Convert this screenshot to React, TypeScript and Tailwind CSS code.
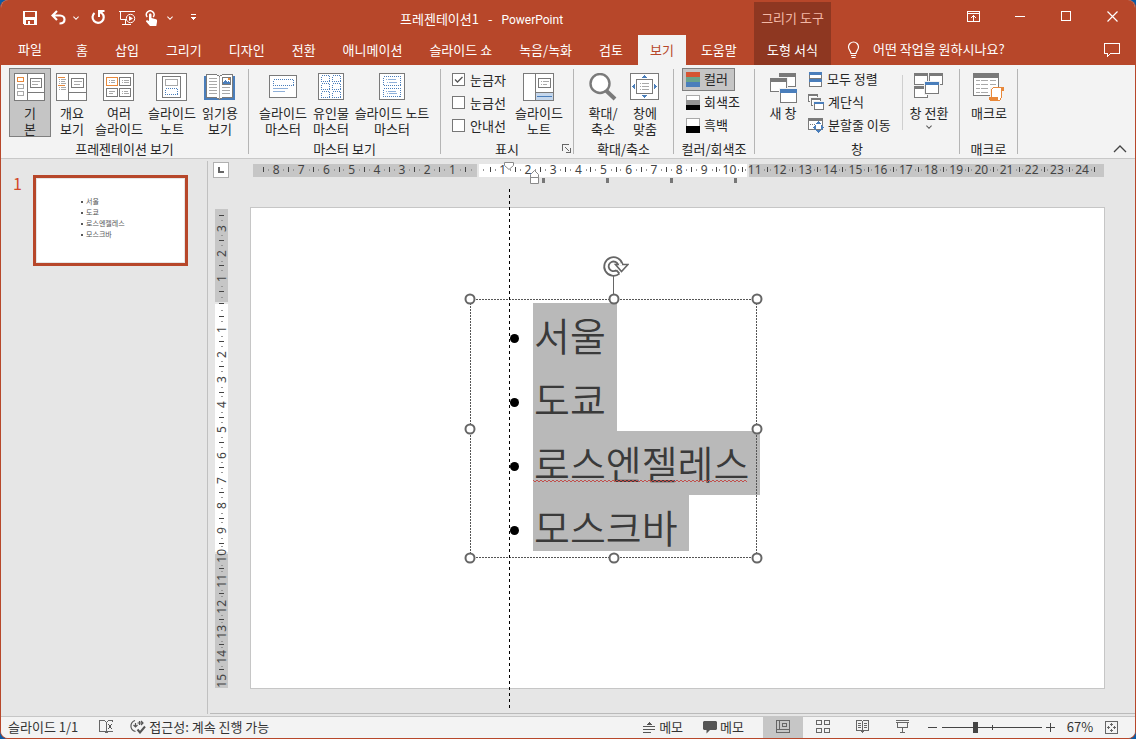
import React from 'react';

const GRAY = '#7a7a7a';
const LIGHT = '#a9a9a9';
const BLUE = '#4a7ebb';
const ORANGE = '#e8883a';

interface IconProps {
  w: number;
  h: number;
  children: React.ReactNode;
  crisp?: boolean;
}

const Icon: React.FC<IconProps> = ({ w, h, children, crisp = true }) => (
  <svg
    width={w}
    height={h}
    viewBox={`0 0 ${w} ${h}`}
    fill="none"
    className="shrink-0"
    shapeRendering={crisp ? 'crispEdges' : 'auto'}
    aria-hidden="true"
  >
    {children}
  </svg>
);

interface BoxProps {
  x: number;
  y: number;
  w: number;
  h: number;
  stroke?: string;
  fill?: string;
  dotted?: boolean;
}

// One pixel outline, x/y/w/h are the outer edges
const Box: React.FC<BoxProps> = ({ x, y, w, h, stroke = GRAY, fill = 'none', dotted }) => (
  <rect
    x={x + 0.5}
    y={y + 0.5}
    width={w - 1}
    height={h - 1}
    stroke={stroke}
    fill={fill}
    strokeDasharray={dotted ? '1 1' : undefined}
  />
);

const Line: React.FC<{ d: string; c?: string }> = ({ d, c = GRAY }) => <path d={d} stroke={c} />;

const NormalIcon = () => (
  <Icon w={31} h={28}>
    <Box x={0} y={0} w={31} h={28} fill="#fff" />
    <Line d="M13.5 0V28M13 19.5H31" />
    <Box x={3} y={4} w={7} h={5} stroke={ORANGE} />
    <Box x={3} y={11} w={7} h={5} stroke={LIGHT} />
    <Box x={3} y={18} w={7} h={5} stroke={LIGHT} />
    <Box x={16} y={5} w={12} h={10} />
    <Line d="M18 8.5H26M18 11.5H24" c={LIGHT} />
  </Icon>
);

const OutlineIcon = () => (
  <Icon w={31} h={28}>
    <Box x={0} y={0} w={31} h={28} fill="#fff" />
    <Line d="M12.5 0V28M12 19.5H31" />
    <Line d="M2 4.5H9M2 12.5H9" c={ORANGE} />
    <Line d="M3 6.5H4M5 6.5H10M3 8.5H4M5 8.5H9M3 10.5H4M5 10.5H10M3 14.5H4M5 14.5H10M3 16.5H4M5 16.5H10" c={LIGHT} />
    <Box x={15} y={5} w={13} h={10} />
    <Line d="M18 8.5H26M18 11.5H24" c={LIGHT} />
  </Icon>
);

const SorterIcon = () => (
  <Icon w={31} h={28}>
    <Box x={0} y={0} w={31} h={28} fill="#fff" />
    <Box x={3} y={4} w={12} h={9} stroke={ORANGE} />
    <Box x={16} y={4} w={12} h={9} />
    <Box x={3} y={15} w={12} h={9} />
    <Box x={16} y={15} w={12} h={9} />
    <Line
      d="M6 7.5H7M8 7.5H12M6 9.5H7M8 9.5H12M19 7.5H20M21 7.5H26M19 9.5H20M21 9.5H26M6 18.5H12M6 20.5H10M19 18.5H20M21 18.5H25M19 20.5H20M21 20.5H26"
      c={LIGHT}
    />
  </Icon>
);

const NotesPageIcon = () => (
  <Icon w={31} h={28}>
    <Box x={0} y={0} w={31} h={28} fill="#fff" />
    <Box x={6} y={3} w={19} h={22} />
    <Box x={9} y={6} w={13} h={7} stroke={LIGHT} />
    <Box x={9} y={15} w={13} h={7} stroke={BLUE} dotted />
  </Icon>
);

const ReadingIcon = () => (
  <Icon w={31} h={28}>
    <path d="M0 3H31V27H0Z" fill={BLUE} />
    <path d="M2.5 1.5H12.5L15.5 3.5L18.5 1.5H28.5V24.5H18.5L15.5 26.5L12.5 24.5H2.5Z" fill="#fff" stroke={GRAY} />
    <Line d="M15.5 4V26" c={LIGHT} />
    <Line d="M5 5.5H13M5 8.5H13M5 11.5H13M5 14.5H13M5 17.5H13M5 20.5H13M18 14.5H26M18 17.5H26M18 20.5H26" c={LIGHT} />
    <Box x={18} y={4} w={9} h={8} />
    <path d="M19 11V9L21 7L23 9L24 8L26 10V11Z" fill={BLUE} />
    <path d="M24 5H26V7H24Z" fill={ORANGE} />
  </Icon>
);

const SlideMasterIcon = () => (
  <Icon w={28} h={28}>
    <rect x="0.5" y="2.5" width="27" height="22" rx="1" fill="#fff" stroke={GRAY} />
    <Box x={4} y={6} w={21} h={7} stroke={BLUE} dotted />
    <Line d="M4 15.5H19M4 18.5H16" c="#8fb0d9" />
  </Icon>
);

const HandoutIcon = () => (
  <Icon w={26} h={28}>
    <Box x={0} y={0} w={26} h={27} fill="#fff" />
    {[2, 10, 18].map((y) => (
      <React.Fragment key={y}>
        <Box x={3} y={y} w={9} h={7} stroke={BLUE} dotted />
        <Box x={14} y={y} w={9} h={7} stroke={BLUE} dotted />
      </React.Fragment>
    ))}
  </Icon>
);

const NotesMasterIcon = () => (
  <Icon w={26} h={28}>
    <Box x={0} y={0} w={26} h={27} fill="#fff" />
    <Box x={4} y={3} w={18} h={10} stroke={BLUE} dotted />
    <Box x={4} y={15} w={18} h={9} stroke={BLUE} dotted />
    <Line d="M7 6.5H8M9 6.5H17M8 9.5H9M10 9.5H18M7 18.5H8M9 18.5H17M8 20.5H9M10 20.5H18" c="#8fb0d9" />
  </Icon>
);

const SlideNotesIcon = () => (
  <Icon w={31} h={28}>
    <Box x={0} y={0} w={31} h={28} fill="#fff" />
    <path d="M13 20H30V27H13Z" fill="#c5d7ec" />
    <Line d="M12.5 0V28M13 19.5H31" />
    <Line d="M14 23.5H29" c={BLUE} />
    <Box x={15} y={5} w={13} h={10} />
    <Line d="M18 8.5H19M20 8.5H26M18 11.5H19M20 11.5H24" c={LIGHT} />
  </Icon>
);

const MagnifierIcon = () => (
  <Icon w={28} h={28} crisp={false}>
    <path d="M16.5 17L26 26" stroke={GRAY} strokeWidth="4" />
    <circle cx="11" cy="10.5" r="9.5" fill="#fff" stroke={GRAY} strokeWidth="2.4" />
  </Icon>
);

const FitIcon = () => (
  <Icon w={29} h={28}>
    <Box x={0} y={0} w={29} h={27} fill="#fff" />
    <Box x={6} y={6} w={17} h={15} />
    <Line d="M10 10.5H11M12 10.5H19M10 13.5H11M12 13.5H19M10 16.5H11M12 16.5H19" c={LIGHT} />
    <path d="M12 5L14.5 2L17 5ZM12 22L14.5 25L17 22ZM5 11V16L2 13.5ZM24 11V16L27 13.5Z" fill={BLUE} />
  </Icon>
);

const ColorIcon: React.FC<{ bands: string[] }> = ({ bands }) => (
  <Icon w={14} h={15}>
    <Box x={0} y={0} w={14} h={15} stroke={LIGHT} fill="#fff" />
    {bands.map((band, i) => {
      const h = 15 / bands.length;
      return band === '#fff' ? null : <rect key={band} x="0" y={Math.round(i * h)} width="14" height={Math.round(h)} fill={band} />;
    })}
  </Icon>
);

const Win: React.FC<{ x: number; y: number; w: number; h: number; bar: number; c?: string }> = ({ x, y, w, h, bar, c = GRAY }) => (
  <>
    <rect x={x - 1} y={y - 1} width={w + 2} height={h + 2} fill="#f3f3f3" />
    <Box x={x} y={y} w={w} h={h} fill="#fff" />
    <rect x={x} y={y} width={w} height={bar} fill={c} />
  </>
);

const NewWindowIcon = () => (
  <Icon w={28} h={32}>
    <Win x={10} y={0} w={17} h={14} bar={4} />
    <Win x={1} y={5} w={17} h={14} bar={4} />
    <Win x={11} y={16} w={17} h={14} bar={4} c={BLUE} />
  </Icon>
);

const ArrangeIcon = () => (
  <Icon w={15} h={15}>
    <Box x={1} y={0} w={13} h={7} fill="#fff" />
    <path d="M1 0H14V3H1Z" fill={BLUE} />
    <Box x={1} y={7} w={13} h={8} fill="#fff" />
    <path d="M1 7H14V10H1Z" fill={BLUE} />
  </Icon>
);

const CascadeIcon = () => (
  <Icon w={16} h={16}>
    <Win x={0} y={0} w={10} h={8} bar={2} />
    <Win x={3} y={4} w={10} h={8} bar={2} />
    <Win x={6} y={8} w={10} h={8} bar={2} c={BLUE} />
  </Icon>
);

const SplitIcon = () => (
  <Icon w={16} h={15}>
    <Box x={0} y={0} w={15} h={12} fill="#fff" />
    <rect width="15" height="3" fill={GRAY} />
    <Line d="M2 6.5H3M4 6.5H5M6 6.5H7" />
    <path d="M8 6L10.5 3L13 6ZM8 12L10.5 15L13 12ZM8 7V12L5 9.5ZM13 7V12L16 9.5Z" fill={BLUE} />
    <path d="M9 8H12V11H9Z" fill="#fff" />
  </Icon>
);

const SwitchIcon = () => (
  <Icon w={29} h={28}>
    <Win x={0} y={0} w={14} h={12} bar={3} />
    <Win x={15} y={0} w={14} h={12} bar={3} />
    <Win x={0} y={13} w={14} h={12} bar={3} />
    <Win x={11} y={9} w={14} h={12} bar={3} c={BLUE} />
  </Icon>
);

const MacroIcon = () => (
  <Icon w={31} h={28}>
    <Box x={0} y={0} w={26} h={23} fill="#fff" />
    <rect width="26" height="5" fill={GRAY} />
    {[7, 11, 15, 19].map((y) => (
      <Line key={y} d={`M3 ${y}.5H7M8 ${y}.5H15M17 ${y}.5H23`} c={LIGHT} />
    ))}
    <path d="M17 14H31V18H30V28H15V23H17Z" fill="#f3f3f3" />
    <path d="M18.5 24V16.5L20.5 14.5H30.5V17.5H28.5V24.5L26.5 27.5H18.5L16.5 26.5V24.5H24.5" fill="#fff" stroke={ORANGE} />
    <path d="M28 14H31V18H28ZM16 24H25V28H18L16 26Z" fill={ORANGE} />
  </Icon>
);

const Chevron: React.FC<{ w?: number; c?: string; up?: boolean }> = ({ w = 7, c = '#fff', up }) => (
  <svg width={w} height={Math.ceil(w / 2) + 1} viewBox="0 0 14 8" fill="none" className={up ? 'rotate-180' : ''} aria-hidden="true">
    <path d="M1 1L7 7L13 1" stroke={c} strokeWidth={w > 10 ? 1.3 : 2.4} />
  </svg>
);

interface BigButtonProps {
  icon: React.ReactNode;
  lines: string[];
  width: string;
  active?: boolean;
  chevron?: boolean;
}

const BigButton: React.FC<BigButtonProps> = ({ icon, lines, width, active, chevron }) => (
  <button
    type="button"
    className={`flex h-[69px] shrink-0 flex-col items-center border pt-1 leading-4 ${width} ${
      active ? 'border-[#7f7f7f] bg-[#c5c5c5]' : 'border-transparent'
    }`}
  >
    <span className="flex h-8 shrink-0 items-start pr-px">{icon}</span>
    <span className="text-center whitespace-pre">{lines.join('\n')}</span>
    {chevron && (
      <span className="pt-1">
        <Chevron w={6} c="#555" />
      </span>
    )}
  </button>
);

const SmallButton: React.FC<{ icon: React.ReactNode; label: string; active?: boolean }> = ({ icon, label, active }) => (
  <button
    type="button"
    className={`flex h-[23px] items-center gap-1 whitespace-nowrap border pr-1.5 pb-px pl-[3px] ${
      active ? 'border-[#7f7f7f] bg-[#c5c5c5]' : 'border-transparent'
    }`}
  >
    {icon}
    <span className="leading-4">{label}</span>
  </button>
);

const Group: React.FC<{ label: string; width: string; launcher?: boolean; children: React.ReactNode }> = ({
  label,
  width,
  launcher,
  children,
}) => (
  <section aria-label={label} className={`flex shrink-0 ${width}`}>
    <div className="relative flex min-w-0 flex-1 flex-col">
      <div className="flex pl-[7px]">{children}</div>
      <div className="mt-1 text-center leading-4 whitespace-nowrap">{label}</div>
      {launcher && (
        <button type="button" aria-label="표시 옵션" className="absolute right-0.5 bottom-1">
          <Icon w={9} h={9}>
            <path d="M0.5 7V0.5H7M3 3L7 7M8.5 3.5V8.5H3.5" stroke="#666" />
          </Icon>
        </button>
      )}
    </div>
    <div className="mt-px h-[85px] w-px bg-[#b5b5b5]" />
  </section>
);

const showOptions = [
  { id: 'ruler', label: '눈금자', checked: true },
  { id: 'gridlines', label: '눈금선', checked: false },
  { id: 'guides', label: '안내선', checked: false },
];

const Ribbon = () => (
  <div className="flex border-b border-[#c8c8c8] bg-[#f3f3f3] pt-[3px] pb-px text-[13px] text-[#262626]">
    <Group label="프레젠테이션 보기" width="w-[248px]">
      <span className="w-px" />
      <BigButton icon={<NormalIcon />} lines={['기', '본']} width="w-[42px]" active />
      <BigButton icon={<OutlineIcon />} lines={['개요', '보기']} width="w-[42px]" />
      <BigButton icon={<SorterIcon />} lines={['여러', '슬라이드']} width="w-[52px]" />
      <BigButton icon={<NotesPageIcon />} lines={['슬라이드', '노트']} width="w-[54px]" />
      <BigButton icon={<ReadingIcon />} lines={['읽기용', '보기']} width="w-[42px]" />
    </Group>
    <Group label="마스터 보기" width="w-[192px]">
      <BigButton icon={<SlideMasterIcon />} lines={['슬라이드', '마스터']} width="w-[54px]" />
      <BigButton icon={<HandoutIcon />} lines={['유인물', '마스터']} width="w-[42px]" />
      <BigButton icon={<NotesMasterIcon />} lines={['슬라이드 노트', '마스터']} width="w-[80px]" />
    </Group>
    <Group label="표시" width="w-[133px]" launcher>
      <div className="flex w-[64px] flex-col pl-1">
        {showOptions.map((option) => (
          <label key={option.id} htmlFor={option.id} className="flex h-[23px] items-center gap-[5px] whitespace-nowrap">
            <span className="relative flex h-[13px] w-[13px] shrink-0">
              <input
                id={option.id}
                type="checkbox"
                defaultChecked={option.checked}
                className="peer h-[13px] w-[13px] appearance-none border border-[#777] bg-white"
              />
              <svg viewBox="0 0 13 13" fill="none" className="pointer-events-none absolute inset-0 hidden peer-checked:block">
                <path d="M3 6.5L5.5 9L10.5 4" stroke="#555" strokeWidth="1.3" />
              </svg>
            </span>
            {option.label}
          </label>
        ))}
      </div>
      <BigButton icon={<SlideNotesIcon />} lines={['슬라이드', '노트']} width="w-[54px]" />
    </Group>
    <Group label="확대/축소" width="w-[100px]">
      <span className="w-px" />
      <BigButton icon={<MagnifierIcon />} lines={['확대/', '축소']} width="w-[42px]" />
      <BigButton icon={<FitIcon />} lines={['창에', '맞춤']} width="w-[42px]" />
    </Group>
    <Group label="컬러/회색조" width="w-[81px]">
      <div className="flex flex-col items-start pl-px">
        <SmallButton icon={<ColorIcon bands={['#d65532', '#6aa38a', '#4a7ebb']} />} label="컬러" active />
        <SmallButton icon={<ColorIcon bands={['#fff', '#929292', '#000']} />} label="회색조" />
        <SmallButton icon={<ColorIcon bands={['#fff', '#000']} />} label="흑백" />
      </div>
    </Group>
    <Group label="창" width="w-[205px]">
      <BigButton icon={<NewWindowIcon />} lines={['새 창']} width="w-[42px]" />
      <div className="flex w-[98px] flex-col items-start">
        <SmallButton icon={<ArrangeIcon />} label="모두 정렬" />
        <SmallButton icon={<CascadeIcon />} label="계단식" />
        <SmallButton icon={<SplitIcon />} label="분할줄 이동" />
      </div>
      <div className="mt-[7px] h-[55px] w-px bg-[#cfcfcf]" />
      <BigButton icon={<SwitchIcon />} lines={['창 전환']} width="w-[52px]" chevron />
    </Group>
    <Group label="매크로" width="w-[58px]">
      <BigButton icon={<MacroIcon />} lines={['매크로']} width="w-[44px]" />
    </Group>
    <button type="button" aria-label="리본 축소" className="ml-auto self-end pr-2 pb-1">
      <Chevron w={14} c="#444" up />
    </button>
  </div>
);

const tabs = ['홈', '삽입', '그리기', '디자인', '전환', '애니메이션', '슬라이드 쇼', '녹음/녹화', '검토', '보기', '도움말'];

const QuickAccess = () => (
  <div className="flex items-center">
    <button type="button" aria-label="저장" className="pr-[14px]">
      <Icon w={14} h={14}>
        <path d="M0 0H14V14H1L0 13Z" fill="#fff" />
        <path d="M2 1H12V6H2ZM3 9H11V13H3Z" fill="#b7472a" />
        <path d="M5 10H7V13H5Z" fill="#fff" />
      </Icon>
    </button>
    <button type="button" aria-label="실행 취소" className="pr-[7px]">
      <Icon w={15} h={15} crisp={false}>
        <path d="M6 1L1.5 5.5L6 10M2 5.5H9C12 5.5 13.5 7.5 13.5 9.5C13.5 12 11.5 13.5 8.5 13.5" stroke="#fff" strokeWidth="2.2" />
      </Icon>
    </button>
    <Chevron w={6} />
    <button type="button" aria-label="다시 실행" className="pl-3">
      <Icon w={15} h={15} crisp={false}>
        <path d="M3.5 3A5.6 5.6 0 1 0 11 3.2L8.5 2" stroke="#fff" strokeWidth="2.2" />
        <path d="M7 0H13.5V2H9V7H7Z" fill="#fff" />
      </Icon>
    </button>
    <button type="button" aria-label="처음부터 시작" className="pl-[13px]">
      <Icon w={17} h={16} crisp={false}>
        <path d="M0 1.5H16M1.5 2V9.5H7M6.5 10V14M3 14.5H12" stroke="#fff" />
        <circle cx="11.5" cy="8.5" r="4.2" stroke="#fff" fill="#b7472a" />
        <path d="M10 6V11L14 8.5Z" fill="#fff" />
      </Icon>
    </button>
    <button type="button" aria-label="터치/마우스 모드" className="pr-[9px] pl-[9px]">
      <Icon w={13} h={16} crisp={false}>
        <path d="M2.2 7A3.8 3.8 0 1 1 8.2 7" stroke="#fff" strokeWidth="1.4" />
        <path d="M4 4.5C4 3 6.5 3 6.5 4.5V8L11 9.2C12 9.5 12.3 10.5 12 12L11.3 16H5L1 11.5C1 10 2.5 9.8 4 11Z" fill="#fff" />
      </Icon>
    </button>
    <Chevron w={6} />
    <button type="button" aria-label="빠른 실행 도구 모음 사용자 지정" className="pl-[17px]">
      <Icon w={7} h={7}>
        <path d="M1 0.5H6" stroke="#fff" />
        <path d="M1 3H6V4H5V5H4V6H3V5H2V4H1Z" fill="#fff" />
      </Icon>
    </button>
  </div>
);

const Header = () => (
  <header className="flex bg-[#b7472a] text-[13px] text-white">
    <div className="w-[753px] shrink-0">
      <div className="flex h-[35px] items-center pl-[22px]">
        <QuickAccess />
        <h1 className="ml-[203px] flex items-baseline gap-[9px] pt-0.5 whitespace-nowrap">
          <span>프레젠테이션1</span>
          <span>-</span>
          <span className="font-['Roboto',sans-serif] text-xs">PowerPoint</span>
        </h1>
      </div>
      <nav className="flex h-[30px] gap-[3px]">
        <button type="button" className="w-[60px] pr-0.5 pb-0.5 whitespace-nowrap">
          파일
        </button>
        {tabs.map((tab) => (
          <button
            key={tab}
            type="button"
            className={`px-3 pb-px whitespace-nowrap ${tab === '보기' ? 'bg-[#f3f3f3] text-[#b7472a]' : ''}`}
          >
            {tab}
          </button>
        ))}
      </nav>
    </div>
    <div className="mt-0.5 flex w-[77px] shrink-0 flex-col items-center bg-[#8e3721]">
      <span className="flex h-[33px] items-center pb-0.5 text-[#f3b8a6]">그리기 도구</span>
      <button type="button" className="h-[30px] w-full pb-px">
        도형 서식
      </button>
    </div>
    <div className="flex min-w-0 flex-1 flex-col">
      <div className="flex h-[35px] justify-end pb-[3px]">
        <button type="button" aria-label="리본 메뉴 표시 옵션" className="flex w-[46px] items-center justify-center pr-px">
          <Icon w={13} h={11}>
            <Box x={0} y={0} w={13} h={11} stroke="#fff" />
            <path d="M0 2.5H13M6.5 4V10M5 5.5H8M4 6.5H5M8 6.5H9" stroke="#fff" />
          </Icon>
        </button>
        <button type="button" aria-label="최소화" className="flex w-[46px] items-center justify-center">
          <span className="h-px w-[10px] bg-white" />
        </button>
        <button type="button" aria-label="최대화" className="flex w-[46px] items-center justify-center">
          <span className="h-[10px] w-[10px] border border-white" />
        </button>
        <button type="button" aria-label="닫기" className="flex w-[46px] items-center justify-center">
          <Icon w={11} h={11} crisp={false}>
            <path d="M0.5 0.5L10.5 10.5M10.5 0.5L0.5 10.5" stroke="#fff" strokeWidth="1.2" />
          </Icon>
        </button>
      </div>
      <div className="flex h-[30px] items-center pr-[14px] pl-4">
        <Icon w={13} h={18} crisp={false}>
          <path
            d="M4 12.5C4 10 1.5 9 1.5 6A5 5 0 0 1 11.5 6C11.5 9 9 10 9 12.5ZM4 14.5H9M4.5 16.5H8.5"
            stroke="#fff"
            strokeWidth="1.2"
          />
        </Icon>
        <button type="button" className="pb-0.5 pl-[13px] whitespace-nowrap">
          어떤 작업을 원하시나요?
        </button>
        <button type="button" aria-label="메모" className="ml-auto">
          <Icon w={17} h={15}>
            <path d="M0.5 0.5H15.5V10.5H6.5L3.5 13.5V10.5H0.5Z" stroke="#fff" />
          </Icon>
        </button>
      </div>
    </div>
  </header>
);

const cities = ['서울', '도쿄', '로스엔젤레스', '모스크바'];

const SlidePanel = () => (
  <aside className="flex w-[207px] shrink-0 border-r border-[#c0c0c0] pt-[14px] pl-[12px]">
    <span className="w-5 text-base leading-4 text-[#d24726]">1</span>
    <button type="button" aria-label="슬라이드 1" className="h-[91px] w-[155px] border-[3px] border-[#b7472a] bg-[#e6e6e6] p-px">
      <ul className="flex h-full flex-col items-start bg-white pt-[17px] pl-11 text-[7px] leading-[11px] text-[#555]">
        {cities.map((city) => (
          <li key={city} className="flex items-center gap-[3px]">
            <span className="h-0.5 w-0.5 rounded-full bg-[#222]" />
            {city}
          </li>
        ))}
      </ul>
    </button>
  </aside>
);

// Centimetre labels; the half-centimetre tick falls between two cells
const columns = Array.from({ length: 33 }, (_, i) => i - 8);
const rows = Array.from({ length: 18 }, (_, i) => i - 3);

const HorizontalRuler = () => (
  <div className="relative mr-px ml-[3px] h-[13px] font-['Noto_Sans',sans-serif] text-[12px] leading-[13px] text-[#444]">
    <div className="absolute inset-0 flex gap-[2px]">
      <span className="flex-[224] bg-[#c6c6c6]" />
      <span className="flex-[268] bg-white" />
      <span className="flex-[355] bg-[#c6c6c6]" />
    </div>
    <div className="relative flex h-full items-center pr-[9px] pb-0.5 pl-[10px]">
      <span className="h-[5px] w-px bg-[#444]" />
      {columns.map((n) => (
        <span key={n} className="flex min-w-0 flex-1 items-center">
          <span className="flex flex-1 items-center justify-center">
            <span className="flex flex-1 justify-center">
              <span className="h-0.5 w-px bg-[#999]" />
            </span>
            <span>{n === 0 ? '' : Math.abs(n)}</span>
            <span className="flex flex-1 justify-center">
              <span className="h-0.5 w-px bg-[#999]" />
            </span>
          </span>
          <span className="h-[5px] w-px bg-[#444]" />
        </span>
      ))}
    </div>
    <svg width="300" height="26" className="absolute top-[-3px] left-[250px]" fill="#fff" stroke="#8a8a8a" aria-hidden="true">
      <path d="M1.5 1.5H10.5V4.5L6 8.5L1.5 4.5Z" />
      <path d="M27.5 16.5V13.5L31.5 9.5L35.5 13.5V16.5ZM27.5 16.5H35.5V22.5H27.5Z" />
      <path d="M39 17H42V22H39ZM103 17H106V22H103ZM167 17H170V22H167ZM231 17H234V22H231Z" fill="#777" stroke="none" />
    </svg>
  </div>
);

const VerticalRuler = () => (
  <div className="relative h-full w-[13px] font-['Noto_Sans',sans-serif] text-[12px] leading-[13px] text-[#444]">
    <div className="absolute inset-0 flex flex-col gap-[2px]">
      <span className="flex-[93] bg-[#c6c6c6]" />
      <span className="flex-[247] bg-white" />
      <span className="flex-[134] bg-[#c6c6c6]" />
    </div>
    <div className="relative flex h-full flex-col items-center pt-[6px]">
      <span className="h-px w-[5px] bg-[#444]" />
      {rows.map((n) => (
        <span key={n} className="flex min-h-0 flex-1 flex-col items-center">
          <span className="flex flex-1 flex-col items-center justify-center">
            <span className="flex flex-1 flex-col justify-center">
              <span className="h-px w-0.5 bg-[#999]" />
            </span>
            {n === 0 ? (
              <span className="h-px w-[5px] bg-[#444]" />
            ) : (
              <span className="rotate-180 [writing-mode:vertical-rl]">{Math.abs(n)}</span>
            )}
            <span className="flex flex-1 flex-col justify-center">
              <span className="h-px w-0.5 bg-[#999]" />
            </span>
          </span>
          <span className="h-px w-[5px] bg-[#444]" />
        </span>
      ))}
      <span className="flex h-[18px] flex-col items-center justify-end">
        <span className="rotate-180 [writing-mode:vertical-rl]">15</span>
      </span>
    </div>
  </div>
);

const handles = [
  'left-0 top-0',
  'left-1/2 top-0',
  'left-full top-0',
  'left-0 top-1/2',
  'left-full top-1/2',
  'left-0 top-full',
  'left-1/2 top-full',
  'left-full top-full',
];

const squiggle = Array.from({ length: 108 }, (_, i) => `${i === 0 ? 'M' : 'L'}${i * 2} ${i % 2 ? 3 : 1}`).join('');

const TextBox = () => (
  <div className="absolute top-[91px] left-[219px] h-[259px] w-[287px]">
    <ul className="pt-[4px] pl-[40px] text-[39px] font-[350] text-[#3a3a3a]">
      {cities.map((city, i) => (
        <li key={city} className="flex h-16 items-start whitespace-nowrap">
          <span className="mt-[31px] h-[9px] w-[9px] shrink-0 rounded-full bg-black" />
          <span className={`relative ml-[14px] bg-[#b9b9b9] pr-[11px] pl-px leading-[62px] ${i === 3 ? 'h-14' : 'h-16'}`}>
            {city}
            {i === 2 && (
              <svg width="216" height="4" className="absolute bottom-3 left-0" fill="none" aria-hidden="true">
                <path d={squiggle} stroke="#c0504d" />
              </svg>
            )}
          </span>
        </li>
      ))}
    </ul>
    <svg className="absolute inset-0 h-full w-full" fill="none" shapeRendering="crispEdges" aria-hidden="true">
      <rect width="100%" height="100%" stroke="#555" strokeWidth="2" strokeDasharray="2 1" />
    </svg>
    <svg width="28" height="44" viewBox="0 0 28 44" fill="none" className="absolute -top-11 left-[131px]" aria-hidden="true">
      <path d="M12.5 21V40" stroke="#666" />
      <path d="M18.5 18.6A9.3 9.3 0 1 1 21.6 9.5M15.3 15.2A4.8 4.8 0 1 1 17 9.8M15.3 15.2L18.5 18.6" stroke="#666" strokeWidth="1.8" />
      <path d="M14.5 9.5H27L20.5 16.5Z" fill="#fff" stroke="#666" strokeWidth="1.6" />
      <path d="M18 9.5H21" stroke="#fff" strokeWidth="2" />
    </svg>
    {handles.map((place) => (
      <span
        key={place}
        className={`absolute h-[11px] w-[11px] -translate-x-1/2 -translate-y-1/2 rounded-full border-2 border-[#666] bg-white ${place}`}
      />
    ))}
  </div>
);

const Workspace = () => (
  <div className="flex flex-1 bg-[#e6e6e6] pt-0.5">
    <SlidePanel />
    <main className="relative ml-[2px] flex min-w-0 flex-1 border-b border-[#bababa] pb-6">
      <div className="flex w-10 shrink-0 flex-col pl-[3px]">
        <button type="button" aria-label="탭 선택" className="mt-px flex h-4 w-4 items-center justify-center border border-[#b0b0b0] bg-white">
          <Icon w={6} h={6}>
            <path d="M0 0H2V4H6V6H0Z" fill="#666" />
          </Icon>
        </button>
        <div className="min-h-0 flex-1 pt-[31px] pb-px pl-0.5">
          <VerticalRuler />
        </div>
      </div>
      <div className="mr-[30px] flex min-w-0 flex-1 flex-col gap-[30px] pt-[3px]">
        <HorizontalRuler />
        <div className="relative aspect-[855/482] w-full border border-[#c6c6c6] bg-white">
          <TextBox />
        </div>
      </div>
      <svg width="1" className="absolute top-7 left-[299px] h-[520px]" aria-hidden="true">
        <path d="M0.5 0V520" stroke="#000" strokeDasharray="3 3" />
      </svg>
    </main>
  </div>
);

const StatusBar = () => (
  <footer className="mt-auto flex h-[22px] items-stretch border-t border-[#c6c6c6] bg-[#f3f3f3] text-[13px] leading-5 whitespace-nowrap text-[#333]">
    <span className="flex items-center pb-0.5 pl-[7px]">슬라이드 1/1</span>
    <button type="button" aria-label="맞춤법 검사" className="flex items-center pb-0.5 pl-[21px]">
      <Icon w={15} h={13}>
        <path d="M7.5 12V2.5L5.5 0.5H0.5V11.5H5.5L7.5 12.5L9.5 11.5H13.5M7.5 2.5L9.5 0.5H13.5V2" stroke="#666" />
        <path d="M9 4L13 9M13 4L9 9" stroke="#555" />
      </Icon>
    </button>
    <button type="button" className="flex items-center gap-[3px] pb-0.5 pl-4">
      <Icon w={16} h={15} crisp={false}>
        <path d="M5 1.5C-0.5 3.5 -0.5 11 5.5 12.5M5.5 4V8M3.5 6L5.5 8L7.5 6M9.5 2V6M7.5 4H13M11 2L13 4L11 6" stroke="#555" strokeWidth="1.2" />
        <path d="M7.5 10.5L10 13.5L15 7.5" stroke="#555" strokeWidth="2" />
      </Icon>
      접근성: 계속 진행 가능
    </button>
    <button type="button" className="ml-auto flex items-center gap-1 pr-5 pb-0.5">
      <Icon w={12} h={12}>
        <path d="M0 5.5H12M0 8.5H12M0 11.5H8" stroke="#555" />
        <path d="M3 4H9L6 1Z" fill="#555" />
      </Icon>
      메모
    </button>
    <button type="button" className="flex items-center gap-[3px] pr-[19px] pb-0.5">
      <Icon w={14} h={14} crisp={false}>
        <path d="M1 1H13L14 2V9L13 10H7L3.5 13.5V10H1L0 9V2Z" fill="#555" />
      </Icon>
      메모
    </button>
    <button type="button" aria-label="기본" className="flex w-10 items-center justify-center bg-[#c6c6c6] pb-0.5">
      <Icon w={14} h={13}>
        <path d="M3.5 0V9M0 9.5H14" stroke="#666" />
        <Box x={0} y={0} w={14} h={13} stroke="#666" />
        <Box x={6} y={3} w={5} h={4} stroke="#666" />
      </Icon>
    </button>
    <button type="button" aria-label="여러 슬라이드" className="flex w-10 items-center justify-center pb-0.5">
      <Icon w={14} h={13}>
        <Box x={0} y={0} w={6} h={5} stroke="#666" />
        <Box x={8} y={0} w={6} h={5} stroke="#666" />
        <Box x={0} y={8} w={6} h={5} stroke="#666" />
        <Box x={8} y={8} w={6} h={5} stroke="#666" />
      </Icon>
    </button>
    <button type="button" aria-label="읽기용 보기" className="flex w-10 items-center justify-center pr-0.5 pb-0.5">
      <Icon w={13} h={13}>
        <path
          d="M0.5 0.5H5.5L6.5 1.5L7.5 0.5H12.5V10.5H7.5L6.5 12.5L5.5 10.5H0.5ZM6.5 1V12M2 3.5H5M2 5.5H5M2 7.5H5M8 3.5H11M8 5.5H11M8 7.5H11"
          stroke="#666"
        />
      </Icon>
    </button>
    <button type="button" aria-label="슬라이드 쇼" className="flex w-10 items-center justify-center pr-0.5 pb-0.5">
      <Icon w={13} h={13}>
        <path d="M0 0.5H13M0 2.5H13M1.5 3V7.5H11.5V3M6.5 8V12M4 12.5H9" stroke="#666" />
      </Icon>
    </button>
    <button type="button" aria-label="축소" className="flex items-center pb-px pl-[5px]">
      <span className="h-px w-[9px] bg-[#444]" />
    </button>
    <div className="relative mr-1 ml-[5px] flex w-[100px] items-center pb-px">
      <span className="absolute left-1/2 h-[5px] w-px bg-[#444]" />
      <input
        type="range"
        aria-label="확대/축소 비율"
        min="0"
        max="100"
        defaultValue="33"
        className="h-[11px] w-full appearance-none bg-transparent [&::-webkit-slider-runnable-track]:h-px [&::-webkit-slider-runnable-track]:bg-[#444] [&::-webkit-slider-thumb]:-mt-[5px] [&::-webkit-slider-thumb]:h-[11px] [&::-webkit-slider-thumb]:w-[5px] [&::-webkit-slider-thumb]:appearance-none [&::-webkit-slider-thumb]:bg-[#444]"
      />
    </div>
    <button type="button" aria-label="확대" className="flex items-center pb-px">
      <Icon w={9} h={9}>
        <path d="M0 4.5H9M4.5 0V9" stroke="#444" />
      </Icon>
    </button>
    <button type="button" className="w-[50px] pb-0.5 text-center">
      67%
    </button>
    <button type="button" aria-label="현재 창 크기에 맞춤" className="flex items-center pr-[17px] pb-px">
      <Icon w={13} h={13}>
        <Box x={0} y={0} w={13} h={13} stroke="#666" />
        <path d="M6.5 2V5M5 3.5H8M6.5 8V11M5 9.5H8M2 6.5H5M3.5 5V8M8 6.5H11M9.5 5V8" stroke="#666" />
      </Icon>
    </button>
  </footer>
);

const App: React.FC = () => {
  return (
    <div className="min-h-screen bg-[#0b5aa5] font-['Noto_Sans_CJK_KR',sans-serif]">
      <div className="flex min-h-screen flex-col overflow-hidden rounded-lg border-x border-b border-[#b7472a] bg-[#e6e6e6]">
        <Header />
        <Ribbon />
        <Workspace />
        <div className="h-0.5" />
        <StatusBar />
      </div>
    </div>
  );
};

export default App;
